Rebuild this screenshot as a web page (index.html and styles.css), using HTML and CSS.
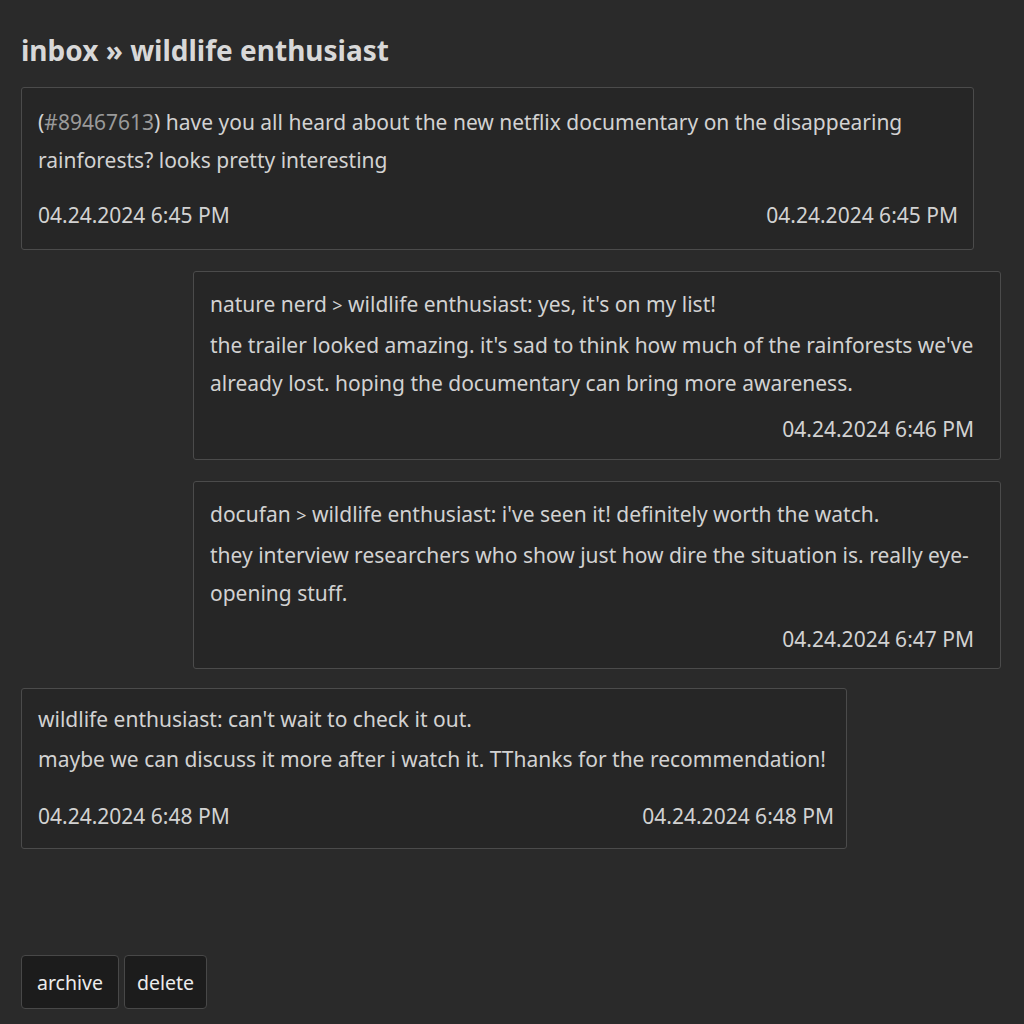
FILE: index.html
```html
<!DOCTYPE html>
<html lang="en">
<head>
<meta charset="utf-8">
<title>inbox » wildlife enthusiast</title>
<link rel="stylesheet" href="styles.css">
</head>
<body>
<h1 class="title">inbox » wildlife enthusiast</h1>
<div class="thread">
  <div class="card card-full">
    <p class="msg">(<span class="ref">#89467613</span>) have you all heard about the new netflix documentary on the disappearing rainforests? looks pretty interesting</p>
    <div class="dates dates-wide">
      <span>04.24.2024 6:45 PM</span>
      <span>04.24.2024 6:45 PM</span>
    </div>
  </div>
  <div class="card card-reply">
    <p class="msg">nature nerd <span class="arrow">&gt;</span> wildlife enthusiast: yes, it's on my list!</p>
    <p class="msg">the trailer looked amazing. it's sad to think how much of the rainforests we've already lost. hoping the documentary can bring more awareness.</p>
    <div class="dates dates-right">
      <span>04.24.2024 6:46 PM</span>
    </div>
  </div>
  <div class="card card-reply card-reply-last">
    <p class="msg">docufan <span class="arrow">&gt;</span> wildlife enthusiast: i've seen it! definitely worth the watch.</p>
    <p class="msg">they interview researchers who show just how dire the situation is. really eye-opening stuff.</p>
    <div class="dates dates-right">
      <span>04.24.2024 6:47 PM</span>
    </div>
  </div>
  <div class="card card-own">
    <p class="msg">wildlife enthusiast: can't wait to check it out.</p>
    <p class="msg">maybe we can discuss it more after i watch it. TThanks for the recommendation!</p>
    <div class="dates dates-wide dates-own">
      <span>04.24.2024 6:48 PM</span>
      <span>04.24.2024 6:48 PM</span>
    </div>
  </div>
</div>
<div class="actions">
  <button class="btn btn-archive">archive</button>
  <button class="btn btn-delete">delete</button>
</div>
</body>
</html>
```

FILE: styles.css
```css
html, body {
  background: #2a2a2a;
}
body {
  margin: 0;
  padding: 0 0 0 21px;
  font-family: "Noto Sans", "Open Sans", sans-serif;
  color: #d2d2d2;
  font-size: 21px;
}
.title {
  margin: 0;
  padding: 31px 0 18px;
  font-size: 28px;
  font-weight: bold;
  line-height: 38px;
  color: #d8d8d8;
}
.thread {
  display: flex;
  flex-direction: column;
  gap: 21px;
}
.card {
  box-sizing: border-box;
  border: 1px solid #4b4b4b;
  border-radius: 3px;
  background: #262626;
  padding: 13px 15px 11px 16px;
}
.card-full {
  width: 953px;
  padding-top: 15px;
  padding-bottom: 15px;
}
.card-reply {
  width: 808px;
  margin-left: 172px;
  padding-bottom: 11px;
}
.card-reply-last {
  padding-bottom: 10px;
}
.card-own {
  width: 826px;
  margin-top: -2px;
  padding-top: 11px;
  padding-right: 12px;
  padding-bottom: 13px;
}
.msg {
  margin: 0;
  line-height: 38px;
}
.msg + .msg {
  margin-top: 2px;
}
.ref {
  color: #9a9a9a;
}
.arrow {
  font-size: 18px;
}
.dates {
  display: flex;
  line-height: 38px;
}
.dates-wide {
  justify-content: space-between;
  margin-top: 17px;
}
.dates-own {
  margin-top: 19px;
}
.dates-right {
  justify-content: flex-end;
  margin-top: 8px;
  padding-right: 11px;
}
.actions {
  display: flex;
  gap: 5px;
  margin-top: 106px;
}
.btn {
  font-family: "Noto Sans", "Open Sans", sans-serif;
  font-size: 19.5px;
  color: #ececec;
  background: #1c1c1c;
  border: 1px solid #484848;
  border-radius: 4px;
  height: 54px;
  padding: 0 14px;
}
.btn-archive {
  padding: 0 15px;
}
.btn-delete {
  padding: 0 12px;
}
```
